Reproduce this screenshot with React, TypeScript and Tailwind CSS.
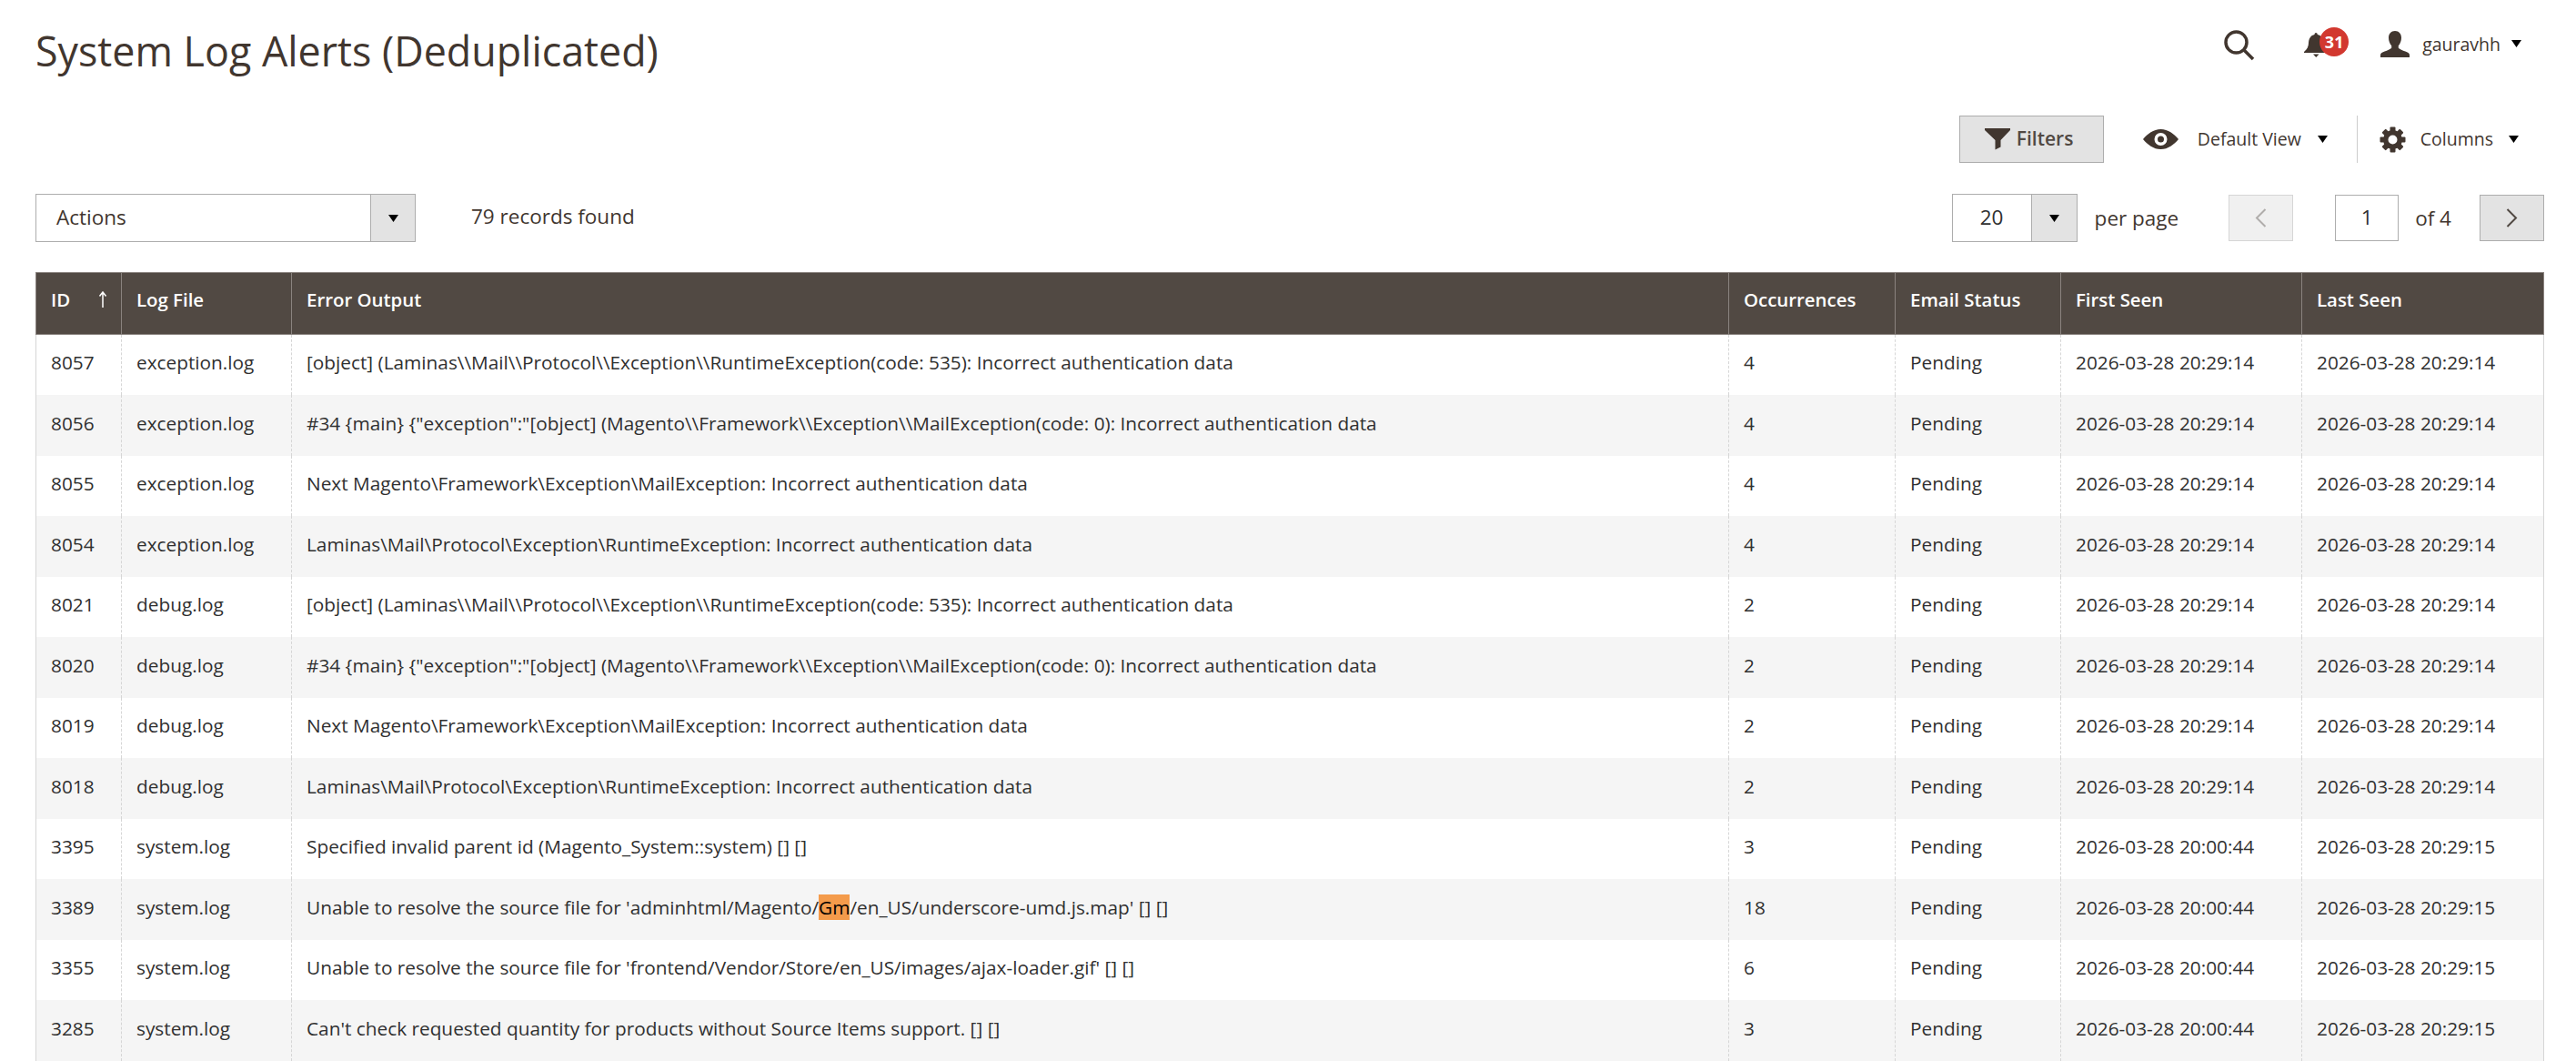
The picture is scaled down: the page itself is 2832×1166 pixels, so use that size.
const rows = [
  ["8057", "exception.log", "[object] (Laminas\\\\Mail\\\\Protocol\\\\Exception\\\\RuntimeException(code: 535): Incorrect authentication data", "4", "2026-03-28 20:29:14", "2026-03-28 20:29:14"],
  ["8056", "exception.log", '#34 {main} {"exception":"[object] (Magento\\\\Framework\\\\Exception\\\\MailException(code: 0): Incorrect authentication data', "4", "2026-03-28 20:29:14", "2026-03-28 20:29:14"],
  ["8055", "exception.log", "Next Magento\\Framework\\Exception\\MailException: Incorrect authentication data", "4", "2026-03-28 20:29:14", "2026-03-28 20:29:14"],
  ["8054", "exception.log", "Laminas\\Mail\\Protocol\\Exception\\RuntimeException: Incorrect authentication data", "4", "2026-03-28 20:29:14", "2026-03-28 20:29:14"],
  ["8021", "debug.log", "[object] (Laminas\\\\Mail\\\\Protocol\\\\Exception\\\\RuntimeException(code: 535): Incorrect authentication data", "2", "2026-03-28 20:29:14", "2026-03-28 20:29:14"],
  ["8020", "debug.log", '#34 {main} {"exception":"[object] (Magento\\\\Framework\\\\Exception\\\\MailException(code: 0): Incorrect authentication data', "2", "2026-03-28 20:29:14", "2026-03-28 20:29:14"],
  ["8019", "debug.log", "Next Magento\\Framework\\Exception\\MailException: Incorrect authentication data", "2", "2026-03-28 20:29:14", "2026-03-28 20:29:14"],
  ["8018", "debug.log", "Laminas\\Mail\\Protocol\\Exception\\RuntimeException: Incorrect authentication data", "2", "2026-03-28 20:29:14", "2026-03-28 20:29:14"],
  ["3395", "system.log", "Specified invalid parent id (Magento_System::system) [] []", "3", "2026-03-28 20:00:44", "2026-03-28 20:29:15"],
  ["3389", "system.log", "HIGHLIGHT", "18", "2026-03-28 20:00:44", "2026-03-28 20:29:15"],
  ["3355", "system.log", "Unable to resolve the source file for 'frontend/Vendor/Store/en_US/images/ajax-loader.gif' [] []", "6", "2026-03-28 20:00:44", "2026-03-28 20:29:15"],
  ["3285", "system.log", "Can't check requested quantity for products without Source Items support. [] []", "3", "2026-03-28 20:00:44", "2026-03-28 20:29:15"],
];

const headers = ["Log File", "Error Output", "Occurrences", "Email Status", "First Seen", "Last Seen"];

const cell = "border-x border-dashed border-[#d6d6d6] pb-[4px] pl-[16px]";

function Caret({ className = "" }: { className?: string }) {
  return (
    <svg width="11" height="8" viewBox="0 0 11 8" className={className}>
      <polygon points="0,0 11,0 5.5,8" fill="#000" />
    </svg>
  );
}

function Chevron({ dir, color }: { dir: "left" | "right"; color: string }) {
  return (
    <svg width="13" height="21" viewBox="0 0 13 21" fill="none">
      <path d={dir === "left" ? "M11.5 1L2 10.5l9.5 9.5" : "M1.5 1L11 10.5 1.5 20"} stroke={color} strokeWidth="2" />
    </svg>
  );
}

function Gear() {
  return (
    <svg width="29" height="29" viewBox="0 0 29 29" fill="#41362f" className="ml-[24px]">
      {[0, 45, 90, 135, 180, 225, 270, 315].map((a) => (
        <rect key={a} x="11.5" y="0.5" width="6" height="7" rx="1" transform={`rotate(${a} 14.5 14.5)`} />
      ))}
      <path fillRule="evenodd" d="M14.500 4a10.500 10.500 0 110 21 10.500 10.500 0 010-21zm0 5.500a5 5 0 100 10 5 5 0 000-10z" />
    </svg>
  );
}

function Select({ label, width, btn, textClass }: { label: string; width: string; btn: string; textClass: string }) {
  return (
    <div className={`flex h-[53px] items-stretch border border-[#adadad] bg-white ${width}`}>
      <div className={`flex flex-1 items-center pb-[2px] ${textClass}`}>{label}</div>
      <div className={`flex items-center justify-center border-l border-[#adadad] bg-[#e3e3e3] ${btn}`}>
        <Caret />
      </div>
    </div>
  );
}

export default function App() {
  return (
    <div className="h-[1166px] overflow-hidden bg-white pl-[39px] pr-[35px] text-[20.8px] text-[#303030] [font-family:'Open_Sans',sans-serif]">
      <div className="flex h-[127px] items-start justify-between">
        <h1 className="mt-[25px] text-[44.8px] leading-[61px] font-normal text-[#41362f]">System Log Alerts (Deduplicated)</h1>
        <div className="mr-[25px] mt-[33px] flex items-center text-[#41362f]">
          <svg width="34" height="34" viewBox="0 0 34 34" fill="none" stroke="#41362f" strokeWidth="3.500">
            <circle cx="13.500" cy="13.500" r="11.500" />
            <path d="M22 22L32 32" />
          </svg>
          <div className="relative ml-[54px] h-[32px] w-[50px] -translate-y-[4px]">
            <svg width="27" height="27" viewBox="0 0 27 27" fill="#41362f" className="absolute left-0 top-[6px]">
              <path d="M13 0c1 0 1.800.8 1.800 2 4.700 1 6.700 5 6.700 9 0 4 1.500 7 5 10v1H0v-1c3.500-3 5-6 5-10 0-4 2-8 6.500-9C11.500.8 12.200 0 13 0z" />
              <path d="M10 23.500h6.500L13.250 27z" />
            </svg>
            <span className="absolute left-[17px] top-0 flex h-[32px] w-[32px] items-center justify-center rounded-full bg-[#d2382f] text-[18px] font-bold text-white">31</span>
          </div>
          <svg width="32" height="29" viewBox="0 0 32 29" className="ml-[34px] -translate-y-[2px]" fill="#41362f">
            <path d="M16 0c4.400 0 7 3.200 7 7.600 0 3.500-1.300 6.600-3.200 8.600v2.600c1.600 1.600 4.400 2.500 7.600 3.800 2.400 1 4.600 2 4.600 3.800V29H0v-2.600c0-1.800 2.200-2.800 4.600-3.800 3.200-1.300 6-2.200 7.600-3.800v-2.600C10.300 14.200 9 11.100 9 7.600 9 3.200 11.600 0 16 0z" />
          </svg>
          <span className="ml-[14px] -translate-y-[2px] text-[19.5px] leading-[29px]">gauravhh</span>
          <Caret className="ml-[12px] -translate-y-[2px]" />
        </div>
      </div>

      <div className="flex h-[86px] items-start justify-end">
        <button className="flex h-[52px] w-[159px] items-center border border-[#adadad] bg-[#e3e3e3] pl-[27px] text-[21px] font-semibold text-[#514943]">
          <svg width="28" height="24" viewBox="0 0 28 24" fill="#41362f">
            <path d="M0 0h28v2L17.500 13v7.500l-6 3V13L0 2z" />
          </svg>
          <span className="ml-[7px]">Filters</span>
        </button>
        <div className="flex h-[52px] items-center text-[19.5px] text-[#41362f]">
          <svg width="39" height="22" viewBox="0 0 39 22" className="ml-[43px]" fill="#41362f">
            <path fillRule="evenodd" d="M19.500 0C27.500 0 34 5 39 11c-5 6-11.500 11-19.500 11S5 17 0 11C5 5 11.500 0 19.500 0zm0 4a7 7 0 100 14 7 7 0 000-14zm0 3.500a3.500 3.500 0 110 7 3.500 3.500 0 010-7z" />
          </svg>
          <span className="ml-[21px]">Default View</span>
          <Caret className="ml-[18px]" />
          <div className="ml-[32px] h-[52px] w-px bg-[#cccccc]" />
          <Gear />
          <span className="ml-[16px]">Columns</span>
          <Caret className="ml-[17px] mr-[28px]" />
        </div>
      </div>

      <div className="flex h-[86px] items-start text-[22.5px]">
        <Select label="Actions" width="w-[418px]" btn="w-[49px]" textClass="pl-[22px] text-[#41362f]" />
        <span className="ml-[61px] mt-[8px] text-[#41362f]">79 records found</span>
        <div className="ml-auto flex items-center">
          <Select label="20" width="w-[138px]" btn="w-[50px]" textClass="justify-center text-[#303030]" />
          <span className="ml-[19px] text-[#41362f]">per page</span>
          <div className="ml-[55px] flex h-[51px] w-[71px] items-center justify-center border border-[#d6d6d6] bg-[#f0f0f0]">
            <Chevron dir="left" color="#b0adab" />
          </div>
          <div className="ml-[46px] flex h-[51px] w-[70px] items-center justify-center border border-[#adadad] bg-white pb-[2px]">1</div>
          <span className="ml-[18px] text-[#41362f]">of 4</span>
          <div className="ml-[31px] flex h-[51px] w-[71px] items-center justify-center border border-[#adadad] bg-[#e3e3e3]">
            <Chevron dir="right" color="#514943" />
          </div>
        </div>
      </div>

      <table className="w-[2757px] table-fixed border-collapse">
        <colgroup>
          <col className="w-[94px]" />
          <col className="w-[187px]" />
          <col className="w-[1580px]" />
          <col className="w-[183px]" />
          <col className="w-[182px]" />
          <col className="w-[265px]" />
          <col className="w-[266px]" />
        </colgroup>
        <thead>
          <tr className="h-[68px] bg-[#514943] text-left text-[20.4px] text-white">
            <th className="border border-[#8a837f] pb-[8px] pl-[16px] font-semibold">
              <div className="flex items-center justify-between pr-[15px]">
                ID
                <svg width="10" height="18" viewBox="0 0 10 18" fill="none" stroke="#fff" strokeWidth="1.500">
                  <path d="M5 18V1M1.500 5.500L5 1l3.500 4.500" />
                </svg>
              </div>
            </th>
            {headers.map((h) => (
              <th key={h} className="border border-[#8a837f] pb-[8px] pl-[16px] font-semibold">{h}</th>
            ))}
          </tr>
        </thead>
        <tbody>
          {rows.map((r, i) => (
            <tr key={r[0]} className={`h-[66.5px] ${i % 2 === 1 ? "bg-[#f5f5f5]" : "bg-white"}`}>
              <td className={`${cell} [border-left-style:solid]`}>{r[0]}</td>
              <td className={cell}>{r[1]}</td>
              <td className={cell}>
                {r[2] === "HIGHLIGHT" ? (
                  <>
                    Unable to resolve the source file for 'adminhtml/Magento/<span className="bg-[#f49b4b] text-black">Gm</span>/en_US/underscore-umd.js.map' [] []
                  </>
                ) : (
                  r[2]
                )}
              </td>
              <td className={cell}>{r[3]}</td>
              <td className={cell}>Pending</td>
              <td className={cell}>{r[4]}</td>
              <td className={`${cell} [border-right-style:solid]`}>{r[5]}</td>
            </tr>
          ))}
        </tbody>
      </table>
    </div>
  );
}
